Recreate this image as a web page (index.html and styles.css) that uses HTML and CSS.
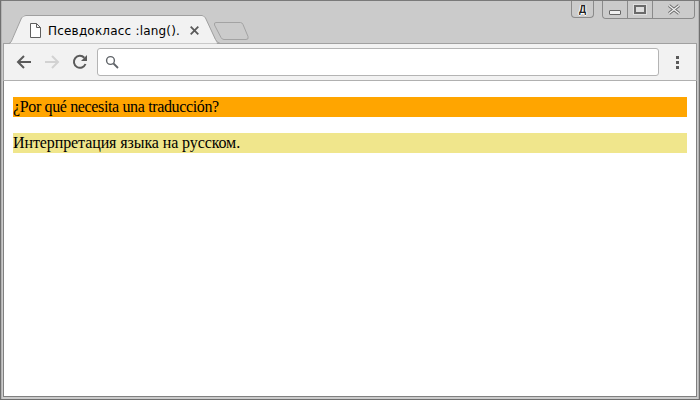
FILE: index.html
```html
<!DOCTYPE html>
<html lang="ru">
<head>
<meta charset="utf-8">
<title>Псевдокласс :lang().</title>
<link rel="stylesheet" href="styles.css">
</head>
<body>
<div class="window">
  <div class="strip">
    <div class="tabs">
      <svg class="tab-shape" width="255" height="45" viewBox="0 0 255 45">
        <path d="M214.500 25Q213.800 22.500 216 22.500H240.500Q242 22.500 243 24.500L248 36.500Q249 39.500 246 39.500H224Q222 39.500 221 37.500Z" fill="#cbcbcb" stroke="#a3a3a3"/>
        <path d="M218 43.500H10L22 17Q23 15 26 15H202Q204 15 205 17L217 43.500Z" fill="#f2f2f2"/>
        <path d="M4 43.500H8.500Q10.500 43.500 11.500 41L21.500 18Q23 15.500 26 15.500H202Q204 15.500 205.500 18L215.500 39.500Q217.500 43.500 220.500 43.500" fill="none" stroke="#a0a0a0"/>
        <path d="M11 44H216V45H11Z" fill="#f2f2f2"/>
      </svg>
      <div class="tab">
        <svg class="page-icon" width="11" height="15" viewBox="0 0 11 15"><path d="M.5.500H6.500L10.500 4.500V14.500H.5ZM6.500.500V4.500H10.500" fill="#fff" stroke="#5f5f5f"/></svg>
        <span class="tab-title">Псевдокласс :lang().</span>
        <svg class="tab-close" width="9" height="9" viewBox="0 0 9 9"><path d="M.7.700L8.300 8.300M8.300.700L.7 8.300" stroke="#5a5a5a" stroke-width="1.800"/></svg>
      </div>
    </div>
    <div class="caption">
      <div class="cap-btn cap-lang">
        <span class="lang-glyph">Д</span>
      </div>
      <div class="cap-group">
        <div class="cap-btn cap-min"><span class="min-glyph"></span></div>
        <div class="cap-btn cap-max"><span class="max-glyph"></span></div>
        <div class="cap-btn cap-close">
          <svg width="14" height="11" viewBox="0 0 14 11"><path d="M2 1.500L12 9.500M12 1.500L2 9.500" stroke="#6a6a6a" stroke-width="3"/><path d="M2 1.500L12 9.500M12 1.500L2 9.500" stroke="#f4f4f4" stroke-width="1.200"/></svg>
        </div>
      </div>
    </div>
  </div>
  <div class="toolbar">
    <svg class="nav" width="16" height="14" viewBox="0 0 16 14"><path d="M15 7H2M8 1L2 7L8 13" fill="none" stroke="#5a5a5a" stroke-width="2"/></svg>
    <svg class="nav" width="16" height="14" viewBox="0 0 16 14"><path d="M1 7H14M8 1L14 7L8 13" fill="none" stroke="#d2d2d2" stroke-width="2"/></svg>
    <svg class="nav reload" width="16" height="16" viewBox="0 0 16 16"><path d="M13.500 10A6 6 0 1 1 12.300 3.700" fill="none" stroke="#5a5a5a" stroke-width="2"/><path d="M15 1V7H9Z" fill="#5a5a5a"/></svg>
    <div class="omnibox">
      <svg width="14" height="14" viewBox="0 0 14 14"><circle cx="5.500" cy="5.500" r="3.900" fill="none" stroke="#5f6368" stroke-width="1.400"/><path d="M8.500 8.500L13 13" stroke="#5f6368" stroke-width="1.800"/></svg>
    </div>
    <div class="menu"><i></i><i></i><i></i></div>
  </div>
  <div class="page">
    <p class="es" lang="es">¿Por qué necesita una traducción?</p>
    <p class="ru" lang="ru">Интерпретация языка на русском.</p>
  </div>
</div>
</body>
</html>
```
FILE: styles.css
```css
html, body { margin: 0; padding: 0; }
body { width: 700px; height: 400px; overflow: hidden; background: #cbcbcb; }
.window {
  box-sizing: border-box;
  width: 700px;
  height: 400px;
  display: flex;
  flex-direction: column;
  background: #cbcbcb;
  border: 1px solid #6f6f6f;
  border-top-color: #7a7a7a;
  padding: 0 2px 2px;
  box-shadow: inset 1px 0 0 #b4b4b4, inset -1px 0 0 #b4b4b4;
}
.strip { height: 42px; display: flex; justify-content: space-between; align-items: flex-start; flex: none; }
.tabs { position: relative; width: 250px; height: 42px; margin-left: -3px; }
.tab-shape { position: absolute; left: 0; top: -1px; z-index: 1; }
.tab {
  position: relative;
  z-index: 2;
  display: flex;
  align-items: center;
  box-sizing: border-box;
  height: 29px;
  margin-top: 15px;
  padding-left: 30px;
  width: 205px;
}
.page-icon { flex: none; }
.tab-title { font: 12px/16px "DejaVu Sans", Tahoma, sans-serif; letter-spacing: .2px; color: #000; margin-left: 7px; width: 142px; white-space: nowrap; }
.tab-close { flex: none; }
.caption { display: flex; align-items: flex-start; gap: 8px; margin-right: 2px; }
.cap-group { display: flex; border: 1px solid #8a8a8a; border-top: 0; border-radius: 0 0 4px 4px; height: 17px; }
.cap-btn { display: flex; align-items: center; justify-content: center; box-sizing: border-box; background: #cbcbcb; }
.cap-lang { width: 23px; height: 17px; border: 1px solid #8a8a8a; border-top: 0; border-radius: 0 0 4px 4px; }
.lang-glyph { font: bold 10px/12px "Liberation Sans", Arial, sans-serif; color: #222; text-shadow: 1px 0 0 #fff, -1px 0 0 #fff, 0 1px 0 #fff; margin-top: 2px; }
.cap-min { width: 25px; border-right: 1px solid #8a8a8a; border-bottom-left-radius: 4px; }
.cap-max { width: 25px; border-right: 1px solid #8a8a8a; }
.cap-close { width: 41px; border-bottom-right-radius: 4px; }
.min-glyph { display: block; box-sizing: border-box; width: 12px; height: 5px; margin-top: 5px; border: 1px solid #666; background: #f0f0f0; border-radius: 1px; }
.max-glyph { display: block; box-sizing: border-box; width: 12px; height: 9px; margin-top: -1px; border: 2px solid #6a6a6a; background: #dedede; box-shadow: 0 0 0 1px #e0e0e0; }
.toolbar {
  flex: none;
  box-sizing: border-box;
  height: 38px;
  display: flex;
  align-items: center;
  background: #f2f2f2;
  border-top: 1px solid #a0a0a0;
  border-bottom: 1px solid #b0b0b0;
  padding: 0 12px 0 12px;
  border-left: 1px solid #a0a0a0;
  border-right: 1px solid #a0a0a0;
}
.nav { flex: none; margin-right: 12px; }
.nav.reload { margin-right: 9px; }
.omnibox {
  box-sizing: border-box;
  flex: 1;
  height: 28px;
  margin-right: 17px;
  display: flex;
  align-items: center;
  padding-left: 7px;
  background: #fff;
  border: 1px solid #b4b4b4;
  border-radius: 3px;
}
.menu { flex: none; display: flex; flex-direction: column; gap: 2px; width: 3px; margin: 0 5px 0 0; }
.menu i { display: block; width: 3px; height: 3px; background: #5a5a5a; }
.page {
  flex: 1;
  background: #fff;
  padding: 16px 9px 0;
  border-left: 1px solid #808080;
  border-right: 1px solid #808080;
  border-bottom: 1px solid #808080;
}
.page p { margin: 0 0 16px; font: 16px/20px "Liberation Serif", "Times New Roman", serif; color: #000; height: 20px; white-space: nowrap; }
.es { background: #ffa500; letter-spacing: -.36px; }
.ru { background: #f0e68c; letter-spacing: -.1px; }
```
